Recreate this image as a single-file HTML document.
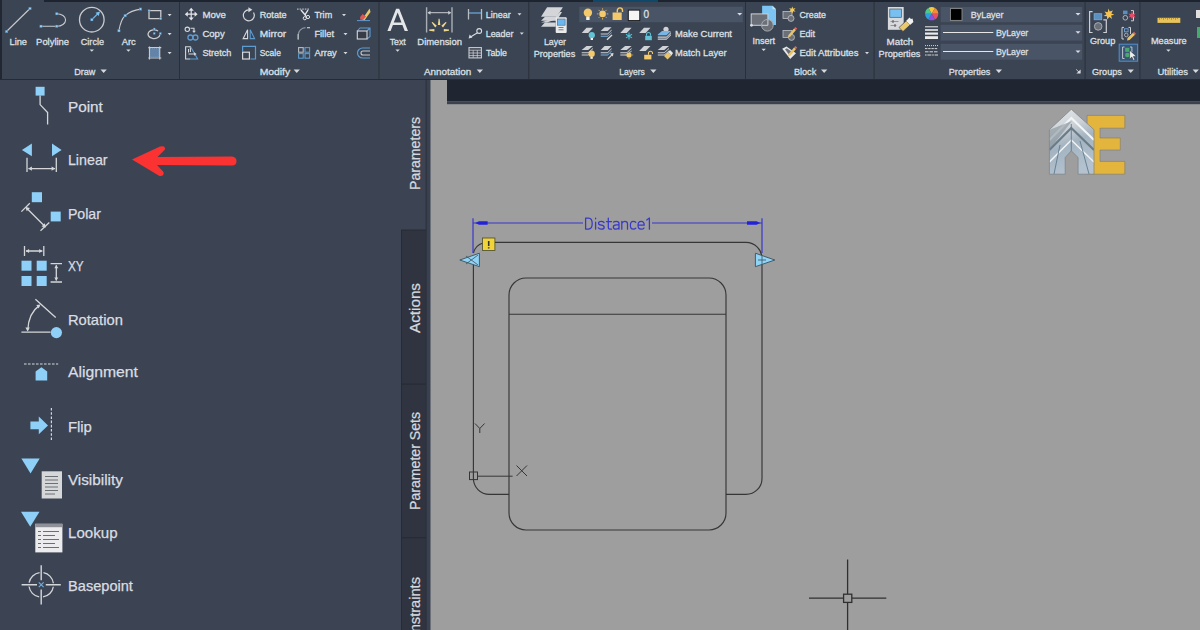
<!DOCTYPE html>
<html><head><meta charset="utf-8">
<style>
html,body{margin:0;padding:0;width:1200px;height:630px;overflow:hidden;background:#3b4352;}
svg{display:block;}
text{font-family:"Liberation Sans",sans-serif;}
.rt{font-size:9.3px;fill:#dde0e4;stroke:#dde0e4;stroke-width:0.28px;}
.pt{font-size:14.5px;fill:#dadde2;stroke:#dadde2;stroke-width:0.25px;}
.tt{font-size:14px;fill:#d5d8dd;stroke:#d5d8dd;stroke-width:0.25px;}
</style></head><body>
<svg width="1200" height="630" viewBox="0 0 1200 630">
<defs>
<linearGradient id="cwg" x1="0" y1="0" x2="1" y2="1"><stop offset="0" stop-color="#f0a040"/><stop offset="1" stop-color="#6060d0"/></linearGradient>
</defs>
<!-- ===== backgrounds ===== -->
<rect x="0" y="0" width="1200" height="630" fill="#3b4352"/>
<!-- ribbon -->
<rect x="0" y="0" width="1200" height="79" fill="#3b4453"/>
<rect x="44" y="0" width="1156" height="2" fill="#1d2430"/>
<rect x="593" y="0" width="65" height="2" fill="#0f4869"/>
<rect x="0" y="0" width="2" height="79" fill="#222833"/>
<rect x="0" y="79" width="1200" height="1.2" fill="#252b35"/>
<g fill="#2a303a">
<rect x="179" y="2" width="1" height="77"/>
<rect x="378.5" y="2" width="1" height="77"/>
<rect x="528.3" y="2" width="1" height="77"/>
<rect x="745" y="2" width="1" height="77"/>
<rect x="873.6" y="2" width="1" height="77"/>
<rect x="1084.6" y="2" width="1" height="77"/>
<rect x="1139.4" y="2" width="1" height="77"/>
</g>
<!-- palette -->
<rect x="0" y="80" width="426" height="550" fill="#3c4453"/>
<!-- tabs -->
<rect x="401.5" y="230" width="25" height="400" fill="#2f3440"/>
<g fill="#262b34">
<rect x="401" y="230" width="1" height="400"/>
<rect x="401" y="229.5" width="25" height="1"/>
<rect x="401" y="383.5" width="25" height="1.2"/>
<rect x="401" y="537" width="25" height="1.2"/>
</g>
<rect x="426" y="80" width="4.5" height="550" fill="#394050"/>
<rect x="425.6" y="80" width="1.1" height="550" fill="#2b313b"/>
<text class="tt" transform="translate(420.4,190) rotate(-90)" textLength="73" lengthAdjust="spacingAndGlyphs">Parameters</text>
<text class="tt" transform="translate(420.4,333) rotate(-90)" textLength="50" lengthAdjust="spacingAndGlyphs">Actions</text>
<text class="tt" transform="translate(420.4,510) rotate(-90)" textLength="98" lengthAdjust="spacingAndGlyphs">Parameter Sets</text>
<text class="tt" transform="translate(420.4,651) rotate(-90)" textLength="74" lengthAdjust="spacingAndGlyphs">Constraints</text>
<!-- canvas -->
<rect x="430.5" y="80" width="770" height="550" fill="#9e9e9e"/>
<rect x="447" y="80" width="753" height="21.2" fill="#1f2632"/>
<rect x="447" y="101.2" width="753" height="3" fill="#3a4250"/>


<!-- ===== ribbon icons: draw ===== -->
<g fill="#d5d8dc">
<path d="M167.6,14 h4 l-2,2.2 z"/><path d="M167.6,33 h4 l-2,2.2 z"/><path d="M167.6,52 h4 l-2,2.2 z"/>
<path d="M89.6,49.5 h4.4 l-2.2,2.3 z"/><path d="M126.2,49.5 h4.4 l-2.2,2.3 z"/>
<path d="M100.5,69.6 h6.3 l-3.15,3.3 z"/>
</g>
<g fill="none" stroke="#c9cbcf" stroke-width="1.1">
<path d="M6.5,31.5 L30,8.5"/>
<path d="M41,26.3 H56.7 M56.7,13.7 A8.9,6.3 0 0 1 56.7,26.3"/>
<circle cx="91.8" cy="19.7" r="12.3" stroke-width="1.3"/>
<path d="M118.9,30.7 Q121,19 125.2,15.6 Q131,10.5 140.5,9.1"/>
<path d="M149,10.6 H160.8 V18.7 H149 Z" stroke-width="1.3"/>
<path d="M158,31 A6,4.3 0 1 0 160,34.5" stroke-width="1.3"/>
<path d="M149.5,46.5 V59.5 M159.7,46.5 V59.5 M148.3,47.7 H161.3 M148.3,58 H161.3" stroke-width="1.2"/>
</g>
<rect x="150.2" y="48.6" width="8.8" height="8.6" fill="#6384a8"/>
<path d="M150.2,48.6 h8.8 v8.6 h-8.8 z" fill="none" stroke="#8fb8e0" stroke-width="0.6" stroke-dasharray="1,1"/>
<path d="M92,19.5 L98.5,13" stroke="#6ab4e8" stroke-width="1.3"/>
<path d="M100,11.5 L95.5,12.8 L98.7,16 Z" fill="#7cc2f0"/>
<g fill="#93cdf2" stroke="#3a6a94" stroke-width="0.4">
<rect x="5.22" y="30.23" width="2.55" height="2.55"/><rect x="28.73" y="7.22" width="2.55" height="2.55"/>
<rect x="39.73" y="25.03" width="2.55" height="2.55"/><rect x="55.43" y="25.03" width="2.55" height="2.55"/><rect x="55.43" y="12.42" width="2.55" height="2.55"/>
<rect x="90.52" y="18.43" width="2.55" height="2.55"/>
<rect x="117.62" y="29.43" width="2.55" height="2.55"/><rect x="123.92" y="14.32" width="2.55" height="2.55"/><rect x="139.22" y="7.82" width="2.55" height="2.55"/>
<rect x="159.69" y="17.69" width="2.12" height="2.12"/><rect x="147.98" y="9.58" width="2.04" height="2.04"/>
<rect x="153.18" y="32.38" width="2.04" height="2.04"/><rect x="159.20" y="32.40" width="2.21" height="2.21"/><rect x="153.18" y="27.98" width="2.04" height="2.04"/>
</g>

<!-- ===== ribbon icons: modify ===== -->
<g fill="#d5d8dc">
<path d="M342,14 h4 l-2,2.2 z"/><path d="M343.5,33 h4 l-2,2.2 z"/><path d="M343.5,52 h4 l-2,2.2 z"/>
<path d="M293.6,69.6 h6.3 l-3.15,3.3 z"/>
</g>
<!-- move -->
<path d="M187,14.2 H195.4 M191.2,10 V18.4" stroke="#e2e4e7" stroke-width="1.2"/>
<g fill="#e2e4e7">
<path d="M191.2,7.8 l-2.6,3 h5.2 z M191.2,20.6 l-2.6,-3 h5.2 z M184.8,14.2 l3,-2.6 v5.2 z M197.6,14.2 l-3,-2.6 v5.2 z"/>
</g>
<!-- copy -->
<circle cx="187.3" cy="29.3" r="2.2" fill="none" stroke="#d5d8dc" stroke-width="1.1"/>
<path d="M190.5,28.2 H194 V31" fill="none" stroke="#d5d8dc" stroke-width="1.1"/>
<path d="M192.2,30.8 h3.6 l-1.8,2.2 z" fill="#d5d8dc"/>
<g fill="none" stroke="#5d9bd1" stroke-width="1.3"><circle cx="190.4" cy="37.5" r="2.5"/><circle cx="195.4" cy="37.5" r="2.5"/></g>
<!-- stretch -->
<path d="M190,59 H185.6 V46.8 H190.4 V52" fill="none" stroke="#d5d8dc" stroke-width="1.1"/>
<path d="M190.6,46.8 L197.6,59 H190" fill="none" stroke="#5d9bd1" stroke-width="1.1"/>
<path d="M188.5,49 V52.5 M188.5,54 H194.5" fill="none" stroke="#d5d8dc" stroke-width="1"/>
<path d="M194,52.3 l2.6,1.7 l-2.6,1.7 z" fill="#d5d8dc"/>
<!-- rotate -->
<path d="M248.8,9.8 A5.5,5.5 0 1 0 253.56,12.55" fill="none" stroke="#d5d8dc" stroke-width="1.2"/>
<path d="M248.4,7.3 L252.4,9.8 L248.4,12.3 Z" fill="#d5d8dc"/>
<!-- mirror -->
<path d="M243.2,38.6 L247.6,29.8 V38.6 Z" fill="none" stroke="#d5d8dc" stroke-width="1.1"/>
<path d="M250.2,29.8 V38.6 H254.6 Z" fill="none" stroke="#5d9bd1" stroke-width="1.1"/>
<!-- scale -->
<path d="M242.6,51.5 V46.3 H255.5 V59 H250.5" fill="none" stroke="#5d9bd1" stroke-width="1.2"/>
<rect x="242.6" y="52.2" width="6.8" height="6.8" fill="none" stroke="#d5d8dc" stroke-width="1.2"/>
<!-- trim -->
<path d="M297,9.1 H310" stroke="#d5d8dc" stroke-width="1" stroke-dasharray="1.6,1"/>
<path d="M301,10 L306,16 M308,10 L304.6,15.4" stroke="#e2e4e7" stroke-width="1.4" fill="none"/>
<circle cx="304.8" cy="18.2" r="1.6" fill="none" stroke="#e2e4e7" stroke-width="1"/>
<circle cx="308" cy="17" r="1.6" fill="none" stroke="#e2e4e7" stroke-width="1"/>
<!-- fillet -->
<path d="M298.2,39.5 V35 A7.5,7.5 0 0 1 305.5,27.7" fill="none" stroke="#8a97a6" stroke-width="1.2"/>
<path d="M298.2,39.5 V34" fill="none" stroke="#b9bcc0" stroke-width="1.2"/>
<path d="M307,27.7 H310" stroke="#c7c9cc" stroke-width="1.2"/>
<!-- array -->
<g fill="none" stroke-width="1.1">
<rect x="298.6" y="47.6" width="4.6" height="4.6" stroke="#b9bcc0"/>
<rect x="305" y="47.6" width="4.6" height="4.6" stroke="#5d9bd1"/>
<rect x="298.6" y="53.6" width="4.6" height="4.6" stroke="#5d9bd1"/>
<rect x="305" y="53.6" width="4.6" height="4.6" stroke="#5d9bd1"/>
</g>
<!-- erase -->
<path d="M357,20.6 H370" stroke="#5d9bd1" stroke-width="1"/>
<path d="M362,19.6 L369.6,8.4 L370.5,12 L364.5,20.3 Z" fill="#e8c867"/>
<path d="M360,17.2 L362.6,14 L366,16.6 L363.2,19.8 L360.4,19.8 Z" fill="#e05555"/>
<!-- explode box -->
<g fill="none" stroke="#5d9bd1" stroke-width="1.1">
<path d="M357.3,31 L360,28 H370 V36.5 L367,39 M367,31 L370,28"/>
</g>
<rect x="357.3" y="31" width="9.7" height="8" fill="#363d49" stroke="#d5d8dc" stroke-width="1.1"/>
<!-- offset -->
<path d="M370,48 H362.5 A5,5 0 0 0 362.5,58 H370" fill="none" stroke="#5d9bd1" stroke-width="1.2"/>
<path d="M370,51 H363 A2,2 0 0 0 363,55 H370" fill="none" stroke="#c9cbcf" stroke-width="1.1"/>


<!-- ===== annotation icons ===== -->
<g fill="#d5d8dc">
<path d="M395.4,49.5 h4.4 l-2.2,2.3 z"/>
<path d="M517.5,13.2 h4 l-2,2.2 z"/><path d="M519.8,32.6 h4 l-2,2.2 z"/>
<path d="M476.7,69.6 h6.3 l-3.15,3.3 z"/>
</g>
<path d="M387.4,31 L396.1,8.7 H399.2 L408,31 H404.7 L402.4,25 H392.9 L390.6,31 Z M393.8,22.4 H401.5 L397.65,12.4 Z" fill="#e3e5e8" fill-rule="evenodd"/>
<g stroke="#a9aeb6" stroke-width="1.4" fill="none">
<path d="M426.6,7.2 V32.5 M452,7.2 V32.5"/>
</g>
<path d="M428,12.7 H450.5" stroke="#c9ccd0" stroke-width="1"/>
<path d="M427.5,12.7 l3,-2 v4 z M451.2,12.7 l-3,-2 v4 z" fill="#c9ccd0"/>
<g fill="#efd88e">
<path d="M437.9,25 L438.6,18.8 H439.6 L440.3,25 Z"/>
<path d="M435.2,27.4 L431.6,22.6 L432.6,22 L436.8,25.8 Z"/>
<path d="M443,27.4 L446.6,22.6 L445.6,22 L441.4,25.8 Z"/>
<path d="M434.4,29 L429.2,29.6 V30.8 L434.4,31.4 Z"/>
<path d="M443.8,29 L449,29.6 V30.8 L443.8,31.4 Z"/>
</g>
<path d="M468.5,9.1 V19.6 M481.5,9.1 V19.6" stroke="#b9bdc3" stroke-width="1.3"/>
<path d="M469,13 H481" stroke="#6aaee0" stroke-width="1.2"/>
<circle cx="479.2" cy="31" r="2.4" fill="none" stroke="#dadce0" stroke-width="1.1"/>
<path d="M477.5,32.8 L470.5,37" stroke="#dadce0" stroke-width="1.1"/>
<path d="M468.6,38.4 L469.6,34.4 L472.4,37.6 Z" fill="#dadce0"/>
<rect x="469" y="47.6" width="12.4" height="10.3" fill="#3e4552" stroke="#c9ccd0" stroke-width="1.1"/>
<path d="M469,50.2 H481.4 M469,53 H481.4 M469,55.6 H481.4 M473.2,50.2 V57.9 M477.3,50.2 V57.9" stroke="#c9ccd0" stroke-width="0.8"/>

<!-- ===== layers ===== -->
<rect x="579.3" y="6.8" width="163.6" height="15.4" fill="#4a5467"/>
<path d="M737.2,13 h5 l-2.5,2.6 z" fill="#dadce0"/>
<circle cx="587.9" cy="12.8" r="4.2" fill="#f4c96c"/>
<rect x="586.2" y="16.8" width="3.4" height="3.2" fill="#f0f0f0"/>
<circle cx="602.6" cy="13.9" r="3.3" fill="#f4c96c"/>
<g stroke="#d8b45a" stroke-width="0.9"><path d="M602.6,8.2 v1.6 M602.6,18 v1.6 M596.9,13.9 h1.6 M606.7,13.9 h1.6 M598.6,9.9 l1.1,1.1 M605.5,16.8 l1.1,1.1 M606.6,9.9 l-1.1,1.1 M599.7,16.8 l-1.1,1.1"/></g>
<rect x="612.6" y="12.5" width="9.1" height="7.5" fill="#f4c96c"/>
<path d="M617.3,12.5 V10.5 A2.6,2.6 0 0 1 622.5,10.5 V12" fill="none" stroke="#f4c96c" stroke-width="1.4"/>
<rect x="628.3" y="10.1" width="11.5" height="10.5" fill="#f5f5f5" stroke="#1b1b1b" stroke-width="1"/>

<!-- layer properties big -->
<g fill="#d3d5d9">
<path d="M541,22.5 L547,22.5 L556.6,19 L556.6,17 Z" />
<path d="M541,26.8 L545,22.6 H555.7 V26.8 Z"/>
<path d="M541,20.8 L545,16.8 H555.7 L560,12 L562,12 L556.7,20.8 Z"/>
<path d="M541,16.8 L547.1,7.2 H562.9 L556.7,16.8 Z"/>
</g>
<rect x="555.7" y="17.2" width="11" height="15.8" rx="1" fill="#e9eaec"/>
<rect x="557.3" y="19" width="7.8" height="6.2" fill="#6cb8ee" stroke="#4d6277" stroke-width="0.6"/>
<path d="M558.5,27.5 h5 M558.5,29.8 h5" stroke="#6d6d6d" stroke-width="0.9"/>
<!-- small layer icons row 2 -->
<g fill="#cfd2d6">
<path d="M581.7,33 L586.5,27.7 H593 L588.2,33 Z"/>
<path d="M600.7,31 L604.6,27.2 H611.6 L607.7,31 Z"/><path d="M600.7,33.4 H607.7 L611.6,29.6 V30.6 L607.7,34.4 H600.7 Z"/>
<path d="M620.3,33 L625.1,27.7 H631.6 L626.8,33 Z"/>
<path d="M639.2,33 L644,27.7 H650.5 L645.7,33 Z"/>
<path d="M657.8,36.5 H666.5 L671,32 V33.2 L666.5,37.7 H657.8 Z M657.8,38.6 H666.5 L671,34.1 V35.3 L666.5,39.8 H657.8 Z"/>
</g>
<circle cx="666" cy="29.3" r="2.6" fill="#cfd2d6"/>
<path d="M657.8,34.4 L662,31 H671 L666.5,35.2 H657.8 Z" fill="#78b6e6"/>
<path d="M600.7,35.8 H607.7 L611.6,32 V33 L607.7,36.8 H600.7 Z" fill="#79b1df"/>
<circle cx="591.8" cy="35.2" r="3.1" fill="#62c3d6"/><rect x="590.6" y="38" width="2.4" height="2" fill="#f0f0f0"/>
<path d="M607,39.8 L612,35" stroke="#d8d8d8" stroke-width="1.4"/>
<g stroke="#4ec2d6" stroke-width="1.1"><path d="M629,32.6 V39.6 M626,34.3 L632,37.9 M632,34.3 L626,37.9"/></g>
<rect x="645.2" y="35.8" width="6.6" height="4.4" fill="#62c3d6"/><path d="M646.5,35.8 V34.5 A2,2 0 0 1 650.5,34.5 V35.8" stroke="#62c3d6" stroke-width="1.1" fill="none"/>
<!-- row 3 -->
<g fill="#cfd2d6">
<path d="M581.7,50 L586.5,46 H593 L588.2,50 Z M581.7,52.2 H588.2 L593,48 V49 L588.2,53.2 H581.7 Z M581.7,54.6 H588.2 L593,50.4 V51.4 L588.2,55.6 H581.7 Z"/>
<path d="M600.7,50 L604.6,46 H611.6 L607.7,50 Z M600.7,52.2 H607.7 L611.6,48 V49 L607.7,53.2 H600.7 Z"/>
<path d="M620.3,50 L625.1,46 H631.6 L626.8,50 Z M620.3,52.2 H626.8 L631.6,48 V49 L626.8,53.2 H620.3 Z M620.3,54.6 H626.8 L631.6,50.4 V51.4 L626.8,55.6 H620.3 Z"/>
<path d="M639.2,51 L644,46 H650.5 L645.7,51 Z"/>
<path d="M657.8,50 L662.6,46 H669 L664.3,50 Z M657.8,52.2 H664.3 L669,48 V49 L664.3,53.2 H657.8 Z M657.8,54.6 H664.3 L669,50.4 V51.4 L664.3,55.6 H657.8 Z"/>
</g>
<path d="M600.7,54.6 H607.7 L611.6,50.6 V51.6 L607.7,55.6 H600.7 Z" fill="#79b1df"/>
<circle cx="591.6" cy="53.8" r="3.2" fill="#f4c96c"/><rect x="590.4" y="56.8" width="2.4" height="2" fill="#f0f0f0"/>
<path d="M608,58.8 L612.6,54.2" stroke="#d8d8d8" stroke-width="1.2"/><path d="M613.5,53 l-3.6,0.6 l3,3 z" fill="#d8d8d8"/>
<circle cx="629" cy="55" r="2.6" fill="#f4c96c"/>
<g stroke="#d8b45a" stroke-width="0.8"><path d="M629,50.8 v1 M629,58.2 v1 M624.8,55 h1 M632.2,55 h1"/></g>
<rect x="644.2" y="54.8" width="7.2" height="4.6" fill="#f4c96c"/><path d="M648.5,54.8 V53.2 A2,2 0 0 1 652.5,53.2 V54" stroke="#f4c96c" stroke-width="1.1" fill="none"/>
<path d="M664,56 L668,52 L671.5,55.5 L667.5,59.5 Z" fill="#e8c468"/><path d="M668,52 L670,50 L673,53 L671.5,55.5 Z" fill="#e6e6e6"/>

<!-- ===== block ===== -->
<path d="M761.5,48.8 h4.4 l-2.2,2.3 z" fill="#d5d8dc"/>
<path d="M821,69.6 h6.3 l-3.15,3.3 z" fill="#d5d8dc"/>
<path d="M650.2,69.6 h6.3 l-3.15,3.3 z" fill="#d5d8dc"/>
<path d="M865,52 h4 l-2,2.2 z" fill="#d5d8dc"/>
<path d="M762.1,5.8 H772.5 L776,9.3 V24.9 H762.1 Z" fill="#7cc4f2"/>
<path d="M772.5,5.8 V9.3 H776" fill="#bfe2f8"/>
<rect x="751.2" y="13.9" width="16.7" height="11.4" fill="#6b6f78" stroke="#cfd1d4" stroke-width="1"/>
<circle cx="767.4" cy="25.3" r="5.8" fill="#6b6f78" stroke="#a8abb0" stroke-width="1"/>
<path d="M762,25.3 H767.9 V19.8" fill="none" stroke="#cfd1d4" stroke-width="1"/>
<circle cx="751.5" cy="25.3" r="1.4" fill="#e0e0e0"/>
<!-- create/edit -->
<g>
<rect x="783" y="11.5" width="9" height="7" fill="#6b6f78" stroke="#bfc2c6" stroke-width="0.8"/>
<circle cx="791" cy="18.4" r="3" fill="#6b6f78" stroke="#bfc2c6" stroke-width="0.8"/>
<path d="M792.3,6.5 l0.9,2.2 l2.3,-0.6 l-1.5,1.8 l1.5,1.8 l-2.3,-0.5 l-0.9,2.2 l-0.9,-2.2 l-2.3,0.5 l1.5,-1.8 l-1.5,-1.8 l2.3,0.6 z" fill="#f1cb62"/>
<rect x="783" y="30.5" width="9" height="7" fill="#6b6f78" stroke="#bfc2c6" stroke-width="0.8"/>
<circle cx="791.5" cy="37.4" r="3" fill="#6b6f78" stroke="#bfc2c6" stroke-width="0.8"/>
<path d="M788.5,35 L794,28.4 L796,30 L790.5,36.6 L788,37.4 Z" fill="#e8c468"/><path d="M794,28.4 L795.3,27 L797.2,28.6 L796,30 Z" fill="#e06464"/>
<path d="M782.2,48.8 L786.5,46.4 L796,53.2 L790.2,59 Z" fill="#e6e7e9"/>
<path d="M785,49.2 L786.8,48.2 L791.5,51.6 L789.6,55.6 Z" fill="#6b6f78"/>
<path d="M788.5,54 L794,47.4 L796,49 L790.5,55.6 L788,56.4 Z" fill="#e8c468"/><path d="M794,47.4 L795.3,46 L797.2,47.6 L796,49 Z" fill="#e06464"/>
</g>

<!-- ===== properties ===== -->
<rect x="887.9" y="7" width="15.8" height="22.8" fill="#d7d9dc"/>
<rect x="889.8" y="9" width="11.8" height="8.3" fill="#78c0f0" stroke="#46586a" stroke-width="0.7"/>
<path d="M890.5,21.5 h8 M890.5,25.5 h6" stroke="#8a8d92" stroke-width="0.9"/>
<path d="M893,20 v3 M895,24 v3" stroke="#555" stroke-width="1"/>
<path d="M899,27.5 L906,21 L910,25 L903,31.5 Z" fill="#ecc96d" stroke="#2c3340" stroke-width="0.6"/>
<path d="M906,21 L909.5,17.5 L911,19 L912.5,18.5 L913.4,22 L910,25 Z" fill="#f0f0f0"/>
<g><path d="M931.7,13.7 L928.40,7.98 A6.6,6.6 0 0 1 935.00,7.98 Z" fill="#f5c842"/><path d="M931.7,13.7 L935.00,7.98 A6.6,6.6 0 0 1 938.30,13.70 Z" fill="#f58a3a"/><path d="M931.7,13.7 L938.30,13.70 A6.6,6.6 0 0 1 935.00,19.42 Z" fill="#e6505e"/><path d="M931.7,13.7 L935.00,19.42 A6.6,6.6 0 0 1 928.40,19.42 Z" fill="#8a52e2"/><path d="M931.7,13.7 L928.40,19.42 A6.6,6.6 0 0 1 925.10,13.70 Z" fill="#2d9fdc"/><path d="M931.7,13.7 L925.10,13.70 A6.6,6.6 0 0 1 928.40,7.98 Z" fill="#4cc890"/></g>
<g fill="#ebebeb">
<rect x="925" y="26.3" width="13" height="1"/><rect x="925" y="29.2" width="13" height="1.6"/><rect x="925" y="32.5" width="13" height="2.2"/><rect x="925" y="36.2" width="13" height="2.8"/>
</g>
<g stroke="#d9d9d9" stroke-width="1">
<path d="M925,45.6 h13" stroke-dasharray="1,1"/><path d="M925,48.6 h13" stroke-dasharray="2.4,0.8"/><path d="M925,51.8 h13" stroke-dasharray="3.5,1"/><path d="M925,55 h13" stroke-dasharray="1.6,0.8,4,0.8"/>
</g>
<g fill="#4a5467">
<rect x="940.6" y="7" width="141.6" height="15.2"/>
<rect x="940.6" y="24.8" width="141.6" height="15.8"/>
<rect x="940.6" y="43.8" width="141.6" height="15.9"/>
</g>
<rect x="950.4" y="8.6" width="11.6" height="11.8" fill="#000" stroke="#8e8e8e" stroke-width="0.9"/>
<path d="M943,32.5 H993.3 M943,51.5 H993.3" stroke="#e6e6e6" stroke-width="1"/>
<g fill="#dadce0">
<path d="M1075.5,13 h5 l-2.5,2.6 z"/><path d="M1075.5,31.2 h5 l-2.5,2.6 z"/><path d="M1075.5,50.4 h5 l-2.5,2.6 z"/>
<path d="M995.7,69.6 h6.3 l-3.15,3.3 z"/>
<path d="M1080.6,69.4 V73.6 H1076.4 Z"/>
</g>
<path d="M1076.2,69.4 L1079.5,72.7" stroke="#dadce0" stroke-width="0.9"/>

<!-- ===== groups ===== -->
<path d="M1092.6,11.6 H1089.6 V32.5 H1092.6 M1103.3,19.8 H1106.3 V32.5 H1103.3" fill="none" stroke="#cdd0d4" stroke-width="1.2"/>
<rect x="1094.1" y="13.7" width="7.7" height="6.1" fill="#5b8fc0" stroke="#7fb2e0" stroke-width="0.7"/>
<circle cx="1098.2" cy="26.4" r="3.8" fill="#6b6f78" stroke="#a8abb0" stroke-width="1"/>
<path d="M1108.4,8.6 l1.3,3 l3.2,-1.2 l-1.6,3 l3.1,1.4 l-3.3,0.8 l0.9,3.3 l-2.6,-2 l-2.2,2.6 l-0.2,-3.3 l-3.4,-0.2 l2.8,-1.8 l-1.9,-2.8 l3.2,0.9 z" fill="#f6c453"/>
<g>
<rect x="1123" y="10.6" width="4.5" height="3.6" fill="#5b8fc0"/>
<circle cx="1125.3" cy="17.8" r="2.3" fill="none" stroke="#b0b3b8" stroke-width="1"/>
<path d="M1131,10.6 H1133.5 V20.8 H1131" fill="none" stroke="#cdd0d4" stroke-width="1"/>
<path d="M1132,11.6 l1,2.4 l2.6,-0.6 l-1.6,2.1 l1.6,2.1 l-2.6,-0.6 l-1,2.4 l-1,-2.4 l-2.6,0.6 l1.6,-2.1 l-1.6,-2.1 l2.6,0.6 z" fill="#e0506a"/>
<path d="M1124,27.4 H1122 V39 H1124 M1128.5,27.4 H1130.5 V34" fill="none" stroke="#cdd0d4" stroke-width="1"/>
<rect x="1124.5" y="28.8" width="3.6" height="3" fill="none" stroke="#6aa3d8" stroke-width="0.9"/>
<circle cx="1126.3" cy="35" r="1.8" fill="none" stroke="#b0b3b8" stroke-width="0.9"/>
<path d="M1127.5,38 L1133,32.8 L1135,34.8 L1129.5,40 L1127,40.6 Z" fill="#e8c468"/><path d="M1133,32.8 L1134,31.8 L1136,33.8 L1135,34.8 Z" fill="#e06464"/>
<rect x="1119.2" y="44.2" width="18.4" height="17" fill="#3a5674" stroke="#5191cc" stroke-width="1"/>
<path d="M1124.5,47 H1122.6 V58.5 H1124.5 M1130,47 H1131.9 V52" fill="none" stroke="#d0d3d7" stroke-width="0.9"/>
<rect x="1125.2" y="47.8" width="4.2" height="4" fill="#4aa86e"/><circle cx="1127.3" cy="55" r="2.2" fill="#4aa86e"/>
<path d="M1129.6,50.2 V59.2 L1131.8,57 L1133.4,60.4 L1134.8,59.7 L1133.3,56.4 L1136.2,56.2 Z" fill="#f0f0f0" stroke="#2a2f38" stroke-width="0.5"/>
</g>
<path d="M1127.6,69.6 h6.3 l-3.15,3.3 z" fill="#d5d8dc"/>
<!-- utilities -->
<rect x="1157.5" y="17.8" width="22.8" height="5.1" fill="#e9c35c"/>
<path d="M1159.5,17.8 v2 M1161.5,17.8 v1.3 M1163.5,17.8 v2 M1165.5,17.8 v1.3 M1167.5,17.8 v2 M1169.5,17.8 v1.3 M1171.5,17.8 v2 M1173.5,17.8 v1.3 M1175.5,17.8 v2 M1177.5,17.8 v1.3" stroke="#8a7a3a" stroke-width="0.6"/>
<path d="M1166.2,49.5 h4.4 l-2.2,2.3 z" fill="#d5d8dc"/>
<path d="M1192.6,69.6 h6.3 l-3.15,3.3 z" fill="#d5d8dc"/>
<rect x="1196" y="10" width="4" height="8" fill="#e0e0e0"/>
<rect x="1197" y="27" width="3" height="11" fill="#4aa86e"/>

<!-- ===== ribbon text ===== -->
<g class="rt">
<text x="9.5" y="44.8" textLength="17.5" lengthAdjust="spacingAndGlyphs">Line</text>
<text x="36.1" y="44.7" textLength="33" lengthAdjust="spacingAndGlyphs">Polyline</text>
<text x="80.8" y="44.7" textLength="23.2" lengthAdjust="spacingAndGlyphs">Circle</text>
<text x="121.8" y="44.7" textLength="14" lengthAdjust="spacingAndGlyphs">Arc</text>
<text x="74.2" y="74.9" textLength="21.2" lengthAdjust="spacingAndGlyphs">Draw</text>
<text x="202.4" y="17.8" textLength="23.6" lengthAdjust="spacingAndGlyphs">Move</text>
<text x="202.4" y="36.8" textLength="22.3" lengthAdjust="spacingAndGlyphs">Copy</text>
<text x="202.4" y="55.9" textLength="29" lengthAdjust="spacingAndGlyphs">Stretch</text>
<text x="259.7" y="17.8" textLength="26.9" lengthAdjust="spacingAndGlyphs">Rotate</text>
<text x="259.7" y="36.8" textLength="26.5" lengthAdjust="spacingAndGlyphs">Mirror</text>
<text x="259.7" y="55.9" textLength="21.2" lengthAdjust="spacingAndGlyphs">Scale</text>
<text x="259.7" y="74.9" textLength="30.5" lengthAdjust="spacingAndGlyphs">Modify</text>
<text x="314.4" y="17.8" textLength="17.8" lengthAdjust="spacingAndGlyphs">Trim</text>
<text x="314.4" y="36.8" textLength="19.6" lengthAdjust="spacingAndGlyphs">Fillet</text>
<text x="314.4" y="55.9" textLength="22.4" lengthAdjust="spacingAndGlyphs">Array</text>
<text x="389.7" y="44.7" textLength="16" lengthAdjust="spacingAndGlyphs">Text</text>
<text x="417.3" y="44.7" textLength="44.7" lengthAdjust="spacingAndGlyphs">Dimension</text>
<text x="485.7" y="18" textLength="25" lengthAdjust="spacingAndGlyphs">Linear</text>
<text x="485.7" y="37" textLength="27.8" lengthAdjust="spacingAndGlyphs">Leader</text>
<text x="486" y="56" textLength="21" lengthAdjust="spacingAndGlyphs">Table</text>
<text x="424" y="74.9" textLength="47.3" lengthAdjust="spacingAndGlyphs">Annotation</text>
<text x="543.9" y="45" textLength="22.1" lengthAdjust="spacingAndGlyphs">Layer</text>
<text x="533.7" y="56.5" textLength="41.5" lengthAdjust="spacingAndGlyphs">Properties</text>
<text x="675" y="36.8" textLength="57" lengthAdjust="spacingAndGlyphs">Make Current</text>
<text x="675" y="55.9" textLength="51.5" lengthAdjust="spacingAndGlyphs">Match Layer</text>
<text x="619.2" y="74.6" textLength="25.6" lengthAdjust="spacingAndGlyphs">Layers</text>
<text x="752.4" y="43.8" textLength="22.5" lengthAdjust="spacingAndGlyphs">Insert</text>
<text x="799.4" y="17.8" textLength="26.6" lengthAdjust="spacingAndGlyphs">Create</text>
<text x="799.4" y="36.8" textLength="15.6" lengthAdjust="spacingAndGlyphs">Edit</text>
<text x="799.4" y="55.9" textLength="59.1" lengthAdjust="spacingAndGlyphs">Edit Attributes</text>
<text x="793.9" y="74.9" textLength="22.3" lengthAdjust="spacingAndGlyphs">Block</text>
<text x="886.6" y="45" textLength="26.7" lengthAdjust="spacingAndGlyphs">Match</text>
<text x="878.6" y="56.5" textLength="41.7" lengthAdjust="spacingAndGlyphs">Properties</text>
<text x="948.8" y="74.6" textLength="41.5" lengthAdjust="spacingAndGlyphs">Properties</text>
<text x="970.8" y="18" textLength="32.7" lengthAdjust="spacingAndGlyphs">ByLayer</text>
<text x="995.9" y="35.6" textLength="32.4" lengthAdjust="spacingAndGlyphs">ByLayer</text>
<text x="995.9" y="54.8" textLength="32.4" lengthAdjust="spacingAndGlyphs">ByLayer</text>
<text x="643.4" y="18.4" style="font-size:10px">0</text>
<text x="1089.9" y="44.4" textLength="25.4" lengthAdjust="spacingAndGlyphs">Group</text>
<text x="1092" y="74.9" textLength="29.9" lengthAdjust="spacingAndGlyphs">Groups</text>
<text x="1150.9" y="44.4" textLength="35.8" lengthAdjust="spacingAndGlyphs">Measure</text>
<text x="1157.5" y="74.9" textLength="30.5" lengthAdjust="spacingAndGlyphs">Utilities</text>
</g>




<!-- ===== palette icons ===== -->
<g fill="#8ed0f7">
<rect x="35.6" y="86.8" width="9" height="8.8"/>
<path d="M21.9,150 L31.9,143.6 V156.3 Z"/><path d="M61.6,150 L52,143.6 V156.3 Z"/>
<rect x="31.8" y="192.2" width="10.2" height="10"/><rect x="50.7" y="211.6" width="10" height="9.8"/>
<rect x="21.5" y="260.7" width="10" height="10"/><rect x="36.7" y="260.7" width="10" height="10"/>
<rect x="21.5" y="276" width="10" height="10"/><rect x="36.7" y="276" width="10" height="10"/>
<circle cx="56.4" cy="332.6" r="5.6"/>
<path d="M35.6,380.5 V371.5 L41.4,367.3 L47.2,371.5 V380.5 Z"/>
<path d="M30.4,421.6 H38.8 V416.5 L48,425.4 L38.8,434.3 V429.2 H30.4 Z"/>
<path d="M21.4,458.6 H39.7 L30.55,473.6 Z"/>
<path d="M21,511.8 H39.5 L30.25,526.7 Z"/>
</g>
<g fill="none" stroke="#d4d6d9" stroke-width="1.3">
<path d="M40.1,95.5 V104.6 L47.6,112.5 V124.4"/>
<path d="M27,157.8 V172 M56.3,157.8 V172 M28.5,168.6 H55"/>
<path d="M21.4,211.6 L29.8,203.3 M40.5,230.7 L49.3,222.6 M26.5,208 L45,226.5"/>
<path d="M24.5,245.9 V256 M43.8,245.9 V256 M26,251 H42.3"/>
<path d="M50.6,263.7 H62 M50.6,282 H62 M56.3,265.2 V280.5"/>
<path d="M21.4,332.2 H50.6 M35.4,299.2 L55.7,317.5 M27.8,330.2 Q28.5,313 39.2,305.6"/>
<path d="M21.6,584.8 H37 M45.8,584.8 H60.8 M41.2,565.2 V580.2 M41.2,589.4 V604.4" stroke-width="1.4"/>
<circle cx="41.2" cy="584.8" r="12.3" stroke-dasharray="15.3 4" stroke-dashoffset="17.3" stroke-width="1.3"/>
</g>
<g fill="#d4d6d9">
<path d="M28.3,168.6 l3.6,-2.2 v4.4 z M55.2,168.6 l-3.6,-2.2 v4.4 z"/>
<path d="M25.5,207 l4.5,1 l-3.3,3.2 z M46,227.5 l-4.5,-1 l3.3,-3.2 z"/>
<path d="M25.8,251 l3.3,-2 v4 z M42.5,251 l-3.3,-2 v4 z"/>
<path d="M56.3,265 l-2,3.3 h4 z M56.3,280.7 l-2,-3.3 h4 z"/>
<path d="M27.6,331.6 l-2.2,-4 h4.4 z M40.5,304.6 l-4.2,0.4 l2.4,3.6 z"/>
</g>
<path d="M24,364 H58.2" stroke="#d4d6d9" stroke-width="1.1" stroke-dasharray="2.6,1.4"/>
<path d="M51.4,408 V441.4" stroke="#d4d6d9" stroke-width="1.2" stroke-dasharray="2.6,1.6"/>
<rect x="41.7" y="471.3" width="20.3" height="27.2" fill="#d6d7d9"/>
<path d="M45,476.5 h13 M45,480 h13 M45,483.5 h13 M45,487 h13 M45,490.5 h13 M45,494 h10" stroke="#6a6e75" stroke-width="1"/>
<rect x="35.3" y="523.8" width="27.1" height="28.6" fill="#ececee"/>
<rect x="35.3" y="523.8" width="27.1" height="3.4" fill="#8e9298"/>
<path d="M38,531.5 h3 M43,531.5 h16 M38,535.5 h3 M43,535.5 h12 M38,539.5 h3 M43,539.5 h16 M38,543.5 h3 M43,543.5 h12 M38,547.5 h3 M43,547.5 h16" stroke="#6a6e75" stroke-width="1.2"/>
<path d="M38.8,582.4 L43.6,587.2 M43.6,582.4 L38.8,587.2" stroke="#6aaee0" stroke-width="1.2"/>

<!-- ===== palette items ===== -->
<g class="pt">
<text x="67.9" y="111.7" textLength="35" lengthAdjust="spacingAndGlyphs">Point</text>
<text x="67.9" y="164.9" textLength="39.7" lengthAdjust="spacingAndGlyphs">Linear</text>
<text x="67.9" y="218.5" textLength="33" lengthAdjust="spacingAndGlyphs">Polar</text>
<text x="67.9" y="271.3" textLength="15.7" lengthAdjust="spacingAndGlyphs">XY</text>
<text x="67.9" y="324.6" textLength="55" lengthAdjust="spacingAndGlyphs">Rotation</text>
<text x="67.9" y="377.4" textLength="70" lengthAdjust="spacingAndGlyphs">Alignment</text>
<text x="67.9" y="431.7" textLength="24" lengthAdjust="spacingAndGlyphs">Flip</text>
<text x="67.9" y="484.5" textLength="55" lengthAdjust="spacingAndGlyphs">Visibility</text>
<text x="68.1" y="538.1" textLength="49.5" lengthAdjust="spacingAndGlyphs">Lookup</text>
<text x="68.1" y="591.4" textLength="64.8" lengthAdjust="spacingAndGlyphs">Basepoint</text>
</g>

<!-- ===== drawing ===== -->
<g fill="none" stroke="#363636" stroke-width="1.15">
<path d="M473.4,256 V478 A16,16 0 0 0 489.4,494.4 H509"/>
<path d="M494,242.4 H746 A16,16 0 0 1 762,258.4 V478.4 A16,16 0 0 1 746,494.4 H726"/>
<path d="M509,295 A17,17 0 0 1 526,278 H709 A17,17 0 0 1 726,295 V513 A17,17 0 0 1 709,530 H526 A17,17 0 0 1 509,513 Z"/>
<path d="M509,314.2 H726"/>
<path d="M473.4,253 A14,14 0 0 1 483,243"/>
</g>
<!-- UCS -->
<g fill="none" stroke="#363636" stroke-width="1">
<rect x="469.5" y="472" width="8" height="7.6"/>
<path d="M477.5,476.2 H512.6"/>
<path d="M516.5,465.5 L527,476 M527,465.5 L516.5,476"/>
<path d="M475,423.5 L479.8,428.5 L484.6,423.5 M479.8,428.5 V433"/>
</g>
<!-- dimension -->
<g stroke="#3434d2" stroke-width="1.15" fill="none">
<path d="M473,218.3 V253"/>
<path d="M762,218.3 V253"/>
<path d="M473,223 H583 M652,223 H762"/>
</g>
<path d="M475.2,223 L479,221.2 H487.6 V224.8 H479 Z" fill="#2222d8"/>
<path d="M760.3,223 L756.5,221.2 H747 V224.8 H756.5 Z" fill="#2222d8"/>
<g stroke="#3838cc" stroke-width="1.25" fill="none" stroke-linecap="round" stroke-linejoin="round">
<path d="M585.6,218 V229 H588.5 Q592.2,229 592.2,223.5 Q592.2,218 588.5,218 Z"/>
<path d="M595.6,222 V229 M595.6,218 V218.8"/>
<path d="M604,222.5 Q603,221.3 601.2,221.3 Q598.5,221.3 598.5,223.2 Q598.5,224.8 601.3,225.2 Q604.2,225.6 604.2,227.2 Q604.2,229.2 601.2,229.2 Q599,229.2 598.3,227.8"/>
<path d="M608.3,218.2 V227.5 Q608.3,229.2 610,229.2 H611.5 M606.5,221.5 H611.5"/>
<path d="M613.6,222 Q614.5,221.3 616.3,221.3 Q619,221.3 619,223.5 V229.2 M619,224.8 H616.3 Q613.3,224.8 613.3,227 Q613.3,229.2 616,229.2 Q618.2,229.2 619,227.5"/>
<path d="M621.8,221.3 V229.2 M621.8,223.5 Q622.8,221.3 624.8,221.3 Q627.5,221.3 627.5,223.8 V229.2"/>
<path d="M635.8,222.3 Q635,221.3 633.2,221.3 Q630.4,221.3 630.4,225.25 Q630.4,229.2 633.2,229.2 Q635,229.2 635.8,228.2"/>
<path d="M638.2,225.2 H644.2 Q644.2,221.3 641.2,221.3 Q638,221.3 638,225.25 Q638,229.2 641.2,229.2 Q643.3,229.2 644,228"/>
<path d="M646.7,220 L649.4,218 V229.2"/>
</g>
<!-- warning -->
<rect x="482.5" y="238" width="12.4" height="12.5" fill="#f0d43a" stroke="#4a4a30" stroke-width="0.8"/>
<path d="M488.7,241 V246 M488.7,247.3 V248.6" stroke="#333" stroke-width="1.6"/>
<!-- grips -->
<path d="M459.8,260 L479.4,253.2 V266.7 Z" fill="#8fd3f5" stroke="#3a5060" stroke-width="0.9"/>
<path d="M466,256 L478,265 M478,255 L466,264" stroke="#3a5060" stroke-width="0.8"/>
<path d="M774.8,260 L755.4,253.2 V266.7 Z" fill="#8fd3f5" stroke="#3a5060" stroke-width="0.9"/>
<path d="M758,260 H766 M762,256 V264" stroke="#3a5060" stroke-width="0.8"/>
<!-- crosshair -->
<g stroke="#303030" stroke-width="1.3" fill="none">
<path d="M847.6,559.5 V594 M847.6,602.5 V630 M809,598.2 H843.5 M852,598.2 H886.3"/>
<rect x="843.6" y="594.2" width="8.2" height="8.2"/>
</g>


<!-- ===== logo ===== -->
<defs>
<linearGradient id="bld" x1="0" y1="0" x2="0.3" y2="1">
<stop offset="0" stop-color="#e6e9ec"/><stop offset="0.35" stop-color="#cdd3d8"/><stop offset="0.6" stop-color="#a3b3c0"/><stop offset="1" stop-color="#b3c2ce"/>
</linearGradient>
<clipPath id="aclip"><path d="M1071.3,109.3 L1094,129.7 V174.2 H1078.1 V157.5 L1071.3,150.8 L1065.2,157.5 V174.2 H1049.4 V129.7 Z"/></clipPath>
</defs>
<path d="M1087.1,115.4 H1124.8 V128.2 H1100 V138 H1120.3 V150 H1100 V161.4 H1124.8 V174.2 H1087.1 Z" fill="#e3b53c" stroke="#7e7a6a" stroke-width="0.6"/>
<g clip-path="url(#aclip)">
<rect x="1049" y="109" width="46" height="66" fill="url(#bld)"/>
<path d="M1049.4,150 L1071.3,128 L1094,150" stroke="#6c7b88" stroke-width="2.2" fill="none"/>
<path d="M1049.4,140 L1071.3,118 L1094,140" stroke="#f2f4f6" stroke-width="2" fill="none"/>
<path d="M1049.4,162 L1071.3,140 L1094,162" stroke="#eef1f3" stroke-width="1.6" fill="none"/>
<path d="M1071.3,124 V152 M1060,145 L1054,174 M1080,141 L1089,174" stroke="#5f7a90" stroke-width="0.9" fill="none"/>
<path d="M1049,130 L1072,121 L1049,150 Z" fill="#7d8a94" opacity="0.55"/>
</g>
<path d="M1071.3,109.3 L1094,129.7 V174.2 H1078.1 V157.5 L1071.3,150.8 L1065.2,157.5 V174.2 H1049.4 V129.7 Z" fill="none" stroke="#7a7f85" stroke-width="0.7"/>

<!-- ===== red arrow ===== -->
<path d="M132,159.5 L160,146.5 Q165.5,145 165,149.5 L157.5,157 L232,156.5 Q236.5,157 236.5,161 Q236.5,165.5 232,165.5 L157,165 L163.5,172 Q164.5,176.5 159.5,176 Z" fill="#fa3232"/>

</svg>
</body></html>
